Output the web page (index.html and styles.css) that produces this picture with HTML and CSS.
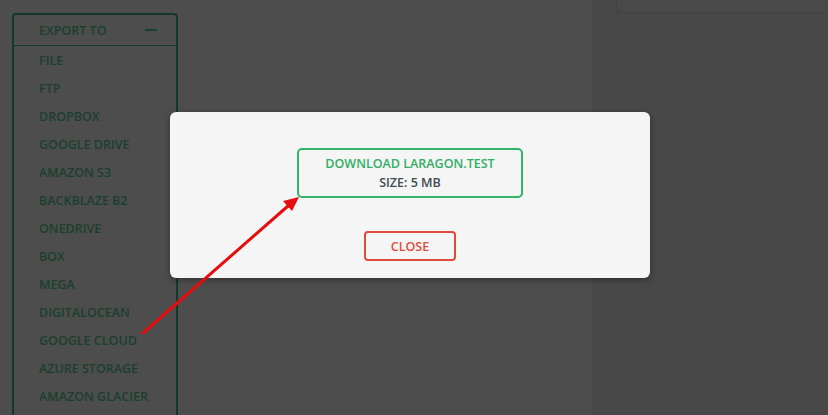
FILE: index.html
```html
<!DOCTYPE html>
<html>
<head>
<meta charset="utf-8">
<link rel="stylesheet" href="styles.css">
</head>
<body>
<div class="page">
  <div class="main">
    <div class="export">
      <div class="export-head">
        <span>EXPORT TO</span>
        <span class="minus"></span>
      </div>
      <ul class="export-list">
        <li>FILE</li>
        <li>FTP</li>
        <li>DROPBOX</li>
        <li>GOOGLE DRIVE</li>
        <li>AMAZON S3</li>
        <li>BACKBLAZE B2</li>
        <li>ONEDRIVE</li>
        <li>BOX</li>
        <li>MEGA</li>
        <li>DIGITALOCEAN</li>
        <li>GOOGLE CLOUD</li>
        <li>AZURE STORAGE</li>
        <li>AMAZON GLACIER</li>
      </ul>
    </div>
  </div>
  <div class="side">
    <div class="side-box"></div>
  </div>
</div>

<div class="modal">
  <div class="download">
    <div class="dl-title">DOWNLOAD LARAGON.TEST</div>
    <div class="dl-size">SIZE: 5 MB</div>
  </div>
  <div class="close">CLOSE</div>
</div>

<svg class="arrow" width="828" height="415" viewBox="0 0 828 415">
  <line x1="143" y1="333" x2="288" y2="206" stroke="#e50d0d" stroke-width="3" stroke-linecap="round"/>
  <polygon points="299,197 283,201 292,211" fill="#e50d0d"/>
</svg>
</body>
</html>
```
FILE: styles.css
```css
html, body {
  margin: 0;
  padding: 0;
}
body {
  width: 828px;
  height: 415px;
  overflow: hidden;
  background: #4d4d4d;
  font-family: "Open Sans", "Liberation Sans", sans-serif;
  position: relative;
}
.page {
  display: flex;
  height: 415px;
}
.main {
  width: 593px;
  padding: 13px 0 0 12px;
  box-sizing: border-box;
}
.export {
  width: 166px;
  border: 2px solid #133a29;
  border-bottom: none;
  border-radius: 4px 4px 0 0;
  box-sizing: border-box;
  height: 410px;
}
.export-head {
  display: flex;
  justify-content: space-between;
  align-items: center;
  height: 30px;
  padding: 0 19px 0 25px;
  border-bottom: 1px solid #133a29;
  font-size: 12.5px;
  font-weight: 600;
  color: #1b3f2f;
}
.minus {
  width: 12px;
  height: 2px;
  background: #1b3f2f;
}
.export-list {
  list-style: none;
  margin: 0;
  padding: 1px 0 0 25px;
}
.export-list li {
  height: 28px;
  line-height: 28px;
  font-size: 12.5px;
  font-weight: 600;
  color: #1b3f2f;
}
.side {
  flex: 1;
  background: #484848;
  border-left: 1px solid #434343;
  padding-left: 22px;
}
.side-box {
  height: 12px;
  border-left: 1px solid #424242;
  border-bottom: 1px solid #424242;
  border-bottom-left-radius: 4px;
  background: #494949;
}
.modal {
  position: absolute;
  left: 170px;
  top: 112px;
  width: 480px;
  height: 166px;
  background: #f5f5f5;
  border-radius: 6px;
  box-shadow: 0 2px 6px rgba(0,0,0,0.35);
  display: flex;
  flex-direction: column;
  align-items: center;
  box-sizing: border-box;
  padding-top: 36px;
}
.download {
  width: 226px;
  height: 50px;
  box-sizing: border-box;
  border: 2px solid #33b36a;
  border-radius: 5px;
  display: flex;
  flex-direction: column;
  align-items: center;
  justify-content: center;
  font-size: 12.5px;
  font-weight: 600;
  line-height: 19px;
}
.dl-title {
  color: #2fae64;
}
.dl-size {
  color: #3e4b52;
}
.close {
  margin-top: 33px;
  width: 92px;
  height: 30px;
  box-sizing: border-box;
  border: 2px solid #df4c3d;
  border-radius: 4px;
  color: #df4c3d;
  font-size: 12.5px;
  font-weight: 600;
  display: flex;
  align-items: center;
  justify-content: center;
}
.arrow {
  position: absolute;
  left: 0;
  top: 0;
  pointer-events: none;
}
```
